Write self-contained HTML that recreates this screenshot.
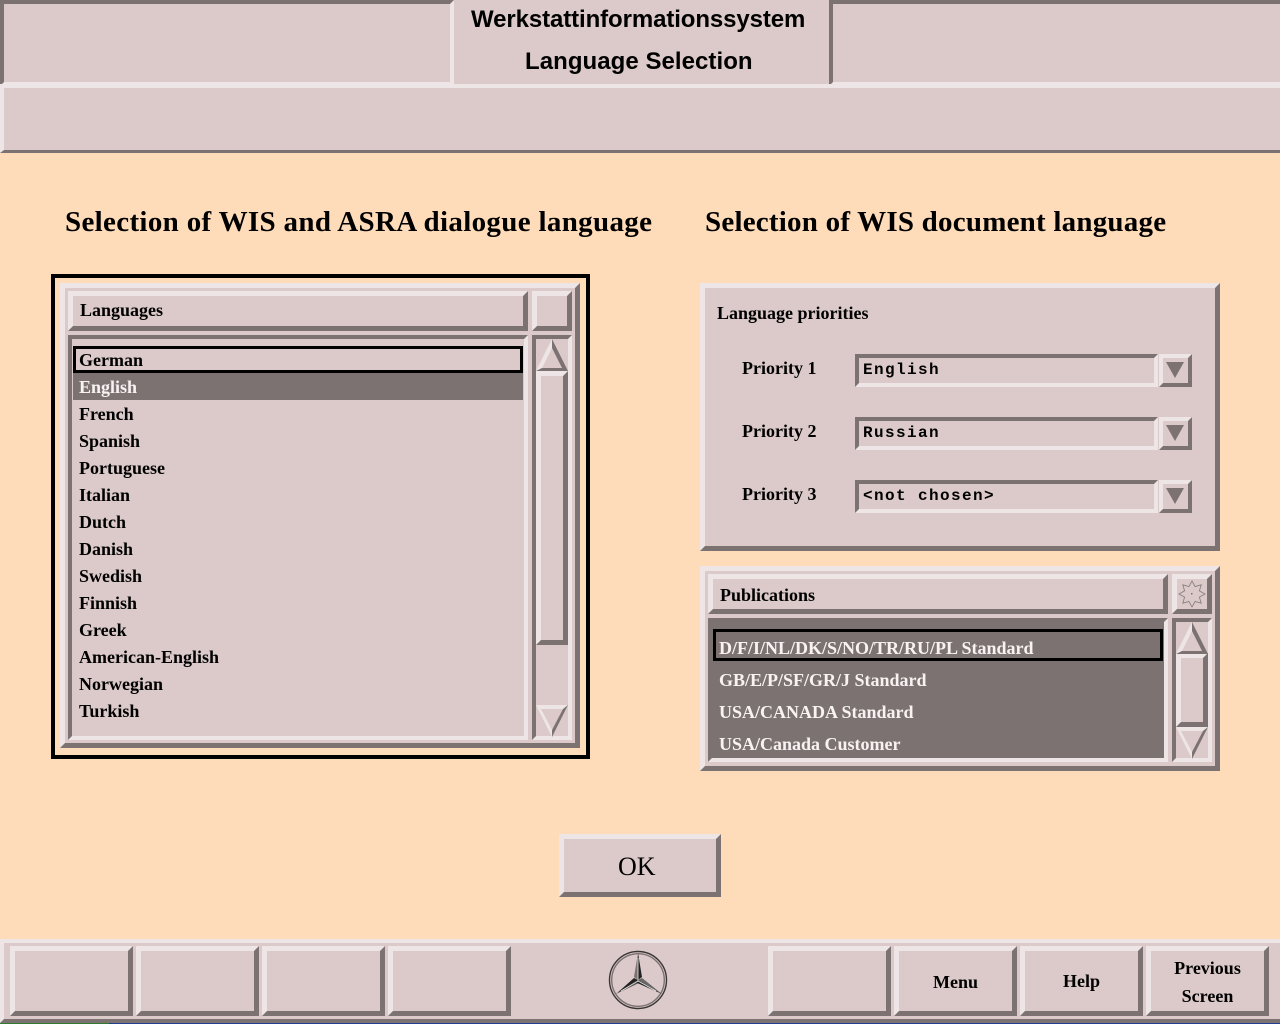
<!DOCTYPE html>
<html><head><meta charset="utf-8"><style>
html,body{margin:0;padding:0;width:1280px;height:1024px;overflow:hidden;background:#fedcb9}
*{box-sizing:border-box}
.b{position:absolute;border-style:solid;background:#dccaca}
.r{border-color:#eee6e6 #7c7272 #7c7272 #eee6e6}
.s{border-color:#7c7272 #eee6e6 #eee6e6 #7c7272}
.t{position:absolute;white-space:nowrap;font-family:"Liberation Serif",serif;font-weight:bold;font-size:18px;line-height:20px;color:#000}
.w{color:#f8f2f2}
.h{font-family:"Liberation Sans",sans-serif;font-size:24px;line-height:30px;margin-top:1px}
.g{font-size:29px;line-height:34px}
.m{font-family:"Liberation Mono",monospace;font-size:16px;letter-spacing:1.4px;margin-top:2px}
.a{position:absolute;left:0;top:0}
</style></head><body>
<!-- top -->
<div class="b s" style="left:0;top:0;width:454px;height:86px;border-width:4px"></div>
<div class="b s" style="left:829px;top:0;width:455px;height:86px;border-width:4px"></div>
<div class="b" style="left:454px;top:0;width:375px;height:84px;border:0"></div>
<div class="b r" style="left:0;top:84px;width:1284px;height:69px;border-width:4px 4px 3px 4px"></div>
<div class="t h" style="left:471px;top:4px;letter-spacing:-.1px">Werkstattinformationssystem</div>
<div class="t h" style="left:525px;top:46px;letter-spacing:.05px">Language Selection</div>

<div class="t g" style="left:65px;top:205px;letter-spacing:.33px">Selection of WIS and ASRA dialogue language</div>
<div class="t g" style="left:705px;top:205px;letter-spacing:.22px">Selection of WIS document language</div>

<!-- left list -->
<div style="position:absolute;left:51px;top:274px;width:539px;height:485px;border:4px solid #000"></div>
<div class="b r" style="left:60px;top:283px;width:520px;height:465px;border-width:5px"></div>
<div class="b r" style="left:68px;top:291px;width:460px;height:40px;border-width:5px"></div>
<div class="b r" style="left:532px;top:291px;width:40px;height:40px;border-width:5px"></div>
<div class="b s" style="left:68px;top:335px;width:460px;height:405px;border-width:4px"></div>
<div class="b s" style="left:532px;top:335px;width:40px;height:405px;border-width:4px"></div>
<div class="b r" style="left:536px;top:371px;width:32px;height:274px;border-width:5px"></div>
<div style="position:absolute;left:73px;top:346px;width:450px;height:27px;border:3px solid #000"></div>
<div style="position:absolute;left:73px;top:373px;width:450px;height:27px;background:#7c7272"></div>
<div class="t" style="left:80px;top:300px">Languages</div>
<div class="t" style="left:79px;top:350px">German</div>
<div class="t w" style="left:79px;top:377px">English</div>
<div class="t" style="left:79px;top:404px">French</div>
<div class="t" style="left:79px;top:431px">Spanish</div>
<div class="t" style="left:79px;top:458px">Portuguese</div>
<div class="t" style="left:79px;top:485px">Italian</div>
<div class="t" style="left:79px;top:512px">Dutch</div>
<div class="t" style="left:79px;top:539px">Danish</div>
<div class="t" style="left:79px;top:566px">Swedish</div>
<div class="t" style="left:79px;top:593px">Finnish</div>
<div class="t" style="left:79px;top:620px">Greek</div>
<div class="t" style="left:79px;top:647px">American-English</div>
<div class="t" style="left:79px;top:674px">Norwegian</div>
<div class="t" style="left:79px;top:701px">Turkish</div>

<!-- priorities -->
<div class="b r" style="left:700px;top:283px;width:520px;height:268px;border-width:5px"></div>
<div class="t" style="left:717px;top:303px">Language priorities</div>
<div class="t" style="left:742px;top:358px">Priority 1</div>
<div class="t" style="left:742px;top:421px">Priority 2</div>
<div class="t" style="left:742px;top:484px">Priority 3</div>
<div class="b s" style="left:855px;top:354px;width:303px;height:33px;border-width:4px"></div>
<div class="b s" style="left:855px;top:417px;width:303px;height:33px;border-width:4px"></div>
<div class="b s" style="left:855px;top:480px;width:303px;height:33px;border-width:4px"></div>
<div class="b r" style="left:1159px;top:354px;width:33px;height:33px;border-width:4px"></div>
<div class="b r" style="left:1159px;top:417px;width:33px;height:33px;border-width:4px"></div>
<div class="b r" style="left:1159px;top:480px;width:33px;height:33px;border-width:4px"></div>
<div class="t m" style="left:863px;top:358px">English</div>
<div class="t m" style="left:863px;top:421px">Russian</div>
<div class="t m" style="left:863px;top:484px">&lt;not chosen&gt;</div>

<!-- publications -->
<div class="b r" style="left:700px;top:566px;width:520px;height:205px;border-width:5px"></div>
<div class="b r" style="left:708px;top:574px;width:460px;height:40px;border-width:5px"></div>
<div class="b r" style="left:1172px;top:574px;width:40px;height:40px;border-width:5px"></div>
<div class="b s" style="left:708px;top:618px;width:460px;height:144px;border-width:4px;background:#7c7272"></div>
<div class="b s" style="left:1172px;top:618px;width:40px;height:144px;border-width:4px"></div>
<div class="b r" style="left:1176px;top:653px;width:32px;height:74px;border-width:5px"></div>
<div style="position:absolute;left:713px;top:629px;width:450px;height:32px;border:3px solid #000"></div>
<div class="t" style="left:720px;top:585px">Publications</div>
<div class="t w" style="left:719px;top:638px">D/F/I/NL/DK/S/NO/TR/RU/PL Standard</div>
<div class="t w" style="left:719px;top:670px">GB/E/P/SF/GR/J Standard</div>
<div class="t w" style="left:719px;top:702px">USA/CANADA Standard</div>
<div class="t w" style="left:719px;top:734px">USA/Canada Customer</div>

<!-- OK -->
<div class="b r" style="left:559px;top:834px;width:162px;height:63px;border-width:5px"></div>
<div class="t" style="left:618px;top:852px;font-size:26px;line-height:30px;font-weight:normal">OK</div>

<!-- bottom -->
<div class="b r" style="left:0;top:939px;width:1284px;height:84px;border-width:4px"></div>
<div style="position:absolute;left:0;top:1023px;width:109px;height:1px;background:#2f7a2f"></div>
<div style="position:absolute;left:109px;top:1023px;width:1171px;height:1px;background:#1f3f8f"></div>
<div class="b r" style="left:10px;top:946px;width:123px;height:70px;border-width:5px"></div>
<div class="b r" style="left:136px;top:946px;width:123px;height:70px;border-width:5px"></div>
<div class="b r" style="left:262px;top:946px;width:123px;height:70px;border-width:5px"></div>
<div class="b r" style="left:388px;top:946px;width:123px;height:70px;border-width:5px"></div>
<div class="b r" style="left:768px;top:946px;width:123px;height:70px;border-width:5px"></div>
<div class="b r" style="left:894px;top:946px;width:123px;height:70px;border-width:5px"></div>
<div class="b r" style="left:1020px;top:946px;width:123px;height:70px;border-width:5px"></div>
<div class="b r" style="left:1146px;top:946px;width:123px;height:70px;border-width:5px"></div>
<div class="t" style="left:894px;width:123px;text-align:center;top:972px">Menu</div>
<div class="t" style="left:1020px;width:123px;text-align:center;top:971px">Help</div>
<div class="t" style="left:1146px;width:123px;text-align:center;top:958px">Previous</div>
<div class="t" style="left:1146px;width:123px;text-align:center;top:986px">Screen</div>

<svg class="a" width="1280" height="1024" viewBox="0 0 1280 1024" fill="none">
<!-- left scrollbar arrows -->
<polygon points="552,339 536,371 542,368 552,348" fill="#eee6e6"/>
<polygon points="552,339 568,371 536,371 542,368 562,368 552,348" fill="#7c7272"/>
<polygon points="536,705 568,705 563,709 541,709" fill="#eee6e6"/>
<polygon points="536,705 541,709 552,730 552,737" fill="#eee6e6"/>
<polygon points="568,705 563,709 552,730 552,737" fill="#7c7272"/>
<!-- right scrollbar arrows -->
<polygon points="1192,622 1176,654 1182,651 1192,631" fill="#eee6e6"/>
<polygon points="1192,622 1208,654 1176,654 1182,651 1202,651 1192,631" fill="#7c7272"/>
<polygon points="1176,727 1208,727 1203,731 1181,731" fill="#eee6e6"/>
<polygon points="1176,727 1181,731 1192,752 1192,759" fill="#eee6e6"/>
<polygon points="1208,727 1203,731 1192,752 1192,759" fill="#7c7272"/>
<!-- combo arrows -->
<polygon points="1166,362 1184,362 1175,378" fill="#7c7272"/>
<polygon points="1166,425 1184,425 1175,441" fill="#7c7272"/>
<polygon points="1166,488 1184,488 1175,504" fill="#7c7272"/>
<!-- star -->
<polygon transform="translate(1192 594)" points="0,-13 3.1,-7.4 9.2,-9.2 7.4,-3.1 13,0 7.4,3.1 9.2,9.2 3.1,7.4 0,13 -3.1,7.4 -9.2,9.2 -7.4,3.1 -13,0 -7.4,-3.1 -9.2,-9.2 -3.1,-7.4" stroke="#8a8080" stroke-width=".9"/>
<rect x="1191" y="593" width="1.5" height="1.5" fill="#7c7272"/>
<!-- logo -->
<g transform="translate(638 980)">
<circle r="28.5" stroke="#3a3535" stroke-width="1.4"/>
<circle r="26.3" stroke="#7c7272" stroke-width="1.4"/>
<polygon points="0,-27 -4,-3 0,0" fill="#7c7272"/>
<polygon points="0,-27 4,-3 0,0" fill="#222"/>
<polygon points="-22,14 -4,-2 0,0" fill="#222"/>
<polygon points="-22,14 3,2 0,0" fill="#555"/>
<polygon points="24,14 4,-2 0,0" fill="#666"/>
<polygon points="24,14 -3,2 0,0" fill="#222"/>
<path d="M0,-22V1M0,1L18,11M0,1L-17,11" stroke="#eee6e6" stroke-width=".8"/>
</g>
</svg>
</body></html>
